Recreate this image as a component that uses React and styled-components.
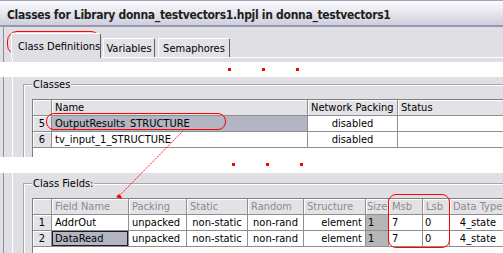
import React from 'react';
import styled, { createGlobalStyle } from 'styled-components';

const UI_FONT = '"DejaVu Sans Condensed", "Liberation Sans", Arial, sans-serif';

const GlobalStyle = createGlobalStyle`
  *, *::before, *::after {
    box-sizing: border-box;
  }
  html, body {
    margin: 0;
    padding: 0;
    background: #ffffff;
  }
  body {
    overflow: hidden;
    font-family: ${UI_FONT};
    font-size: 11px;
    color: #000;
  }
`;

const classRows = [
  { n: 5, name: 'OutputResults_STRUCTURE', packing: 'disabled', selected: true },
  { n: 6, name: 'tv_input_1_STRUCTURE', packing: 'disabled' },
];

const fieldRows = [
  { n: 1, name: 'AddrOut' },
  { n: 2, name: 'DataRead', focused: true },
];

function App() {
  return (
    <>
      <GlobalStyle />
      <Window>
        <TitleBar>Classes for Library donna_testvectors1.hpjl in donna_testvectors1</TitleBar>

        <Band $h={35}>
          <FrameEdge>
            <TabRow>
              <Tab $active $w={90}>Class Definitions</Tab>
              <Tab $w={52}>Variables</Tab>
              <Tab $w={72}>Semaphores</Tab>
            </TabRow>
            <PaneTop />
          </FrameEdge>
        </Band>

        <Gap $h={15}>
          <Dots $x={228} $y={6}><Dot /><Dot /><Dot /></Dots>
        </Gap>

        <Band $h={80}>
          <FrameEdge>
            <Pane>
              <GroupBox $top={7}>
                <Legend>Classes</Legend>
                <TableBox>
                  <Grid $cols="18px 255px 89px 140px">
                    <HeadCell />
                    <HeadCell>Name</HeadCell>
                    <HeadCell>Network Packing</HeadCell>
                    <HeadCell>Status</HeadCell>
                    {classRows.map((r) => (
                      <React.Fragment key={r.n}>
                        <RowNum>{r.n}</RowNum>
                        <Cell $tone={r.selected ? 'selected' : 'plain'}>{r.name}</Cell>
                        <Cell $align="center">{r.packing}</Cell>
                        <Cell />
                      </React.Fragment>
                    ))}
                  </Grid>
                </TableBox>
              </GroupBox>
            </Pane>
          </FrameEdge>
        </Band>

        <Gap $h={16}>
          <Dots $x={232} $y={6}><Dot /><Dot /><Dot /></Dots>
        </Gap>

        <Band $h={80}>
          <FrameEdge>
            <Pane>
              <GroupBox $top={10}>
                <Legend>Class Fields:</Legend>
                <TableBox>
                  <Grid $cols="18px 76px 57px 60px 55px 61px 22px 33px 26px 56px">
                    <HeadCell />
                    <HeadCell $dim>Field Name</HeadCell>
                    <HeadCell $dim>Packing</HeadCell>
                    <HeadCell $dim>Static</HeadCell>
                    <HeadCell $dim>Random</HeadCell>
                    <HeadCell $dim>Structure</HeadCell>
                    <HeadCell $dim $tight>Size</HeadCell>
                    <HeadCell $dim>Msb</HeadCell>
                    <HeadCell $dim>Lsb</HeadCell>
                    <HeadCell $dim>Data Type</HeadCell>
                    {fieldRows.map((r) => (
                      <React.Fragment key={r.n}>
                        <RowNum>{r.n}</RowNum>
                        <Cell $tone={r.focused ? 'focused' : 'plain'}>{r.name}</Cell>
                        <Cell>unpacked</Cell>
                        <Cell $align="center">non-static</Cell>
                        <Cell $align="center">non-rand</Cell>
                        <Cell $align="flex-end">element</Cell>
                        <Cell $tone="shaded" $tight>1</Cell>
                        <Cell>7</Cell>
                        <Cell $tight>0</Cell>
                        <Cell $align="center">4_state</Cell>
                      </React.Fragment>
                    ))}
                  </Grid>
                </TableBox>
              </GroupBox>
            </Pane>
          </FrameEdge>
        </Band>

        <Callout $x={7} $y={31} $w={94} $h={24} $r={10} />
        <Callout $x={46} $y={113} $w={180} $h={17} $r={8} />
        <Callout $x={388} $y={194} $w={62} $h={54} $r={8} />
        <Pointer viewBox="0 0 503 253" width="503" height="253">
          <line x1="183" y1="131" x2="119" y2="196" stroke="#ff0000" strokeWidth="1" strokeDasharray="1.5 1" />
          <path d="M116 197 L119 194 L121 196 L122 199 L119 198 Z" fill="#ff0000" />
        </Pointer>
      </Window>
    </>
  );
}

const Window = styled.div`
  position: relative;
  width: 503px;
  height: 253px;
  overflow: hidden;
  display: flex;
  flex-direction: column;
  background: #fff;
`;

const TitleBar = styled.div`
  height: 27px;
  flex: none;
  display: flex;
  align-items: center;
  padding: 4px 0 0 7px;
  border-top: 1px solid #a3a3bb;
  border-bottom: 2px solid #9797af;
  background: linear-gradient(to bottom, #fbfbfd 0%, #ececf2 35%, #cfcfdc 100%);
  font-weight: bold;
  font-size: 12px;
  letter-spacing: -0.3px;
  color: #1e1e1e;
  white-space: nowrap;
`;

const Band = styled.div`
  height: ${(p) => p.$h}px;
  flex: none;
  display: flex;
  padding-left: 3px;
  background: #e0dfe3;
  overflow: hidden;
`;

const FrameEdge = styled.div`
  flex: 1;
  display: flex;
  flex-direction: column;
  border-left: 1px solid #8e8ea2;
  padding-left: 7px;
`;

const TabRow = styled.div`
  height: 30px;
  flex: none;
  display: flex;
  align-items: flex-end;
`;

const Tab = styled.div`
  position: relative;
  z-index: ${(p) => (p.$active ? 1 : 0)};
  width: ${(p) => p.$w}px;
  height: ${(p) => (p.$active ? 25 : 19)}px;
  margin-right: ${(p) => (p.$active ? 2 : 3)}px;
  margin-bottom: ${(p) => (p.$active ? -1 : 0)}px;
  padding-left: ${(p) => (p.$active ? 6 : 0)}px;
  display: flex;
  align-items: center;
  justify-content: center;
  background: ${(p) => (p.$active ? '#e0dfe3' : '#e3e2e6')};
  border: 1px solid;
  border-color: #ffffff #5f5f66 transparent #ffffff;
  border-bottom: none;
  border-radius: 2px 2px 0 0;
  font-size: 11px;
  white-space: nowrap;
`;

const PaneTop = styled.div`
  flex: 1;
  margin-left: 1px;
  border-top: 1px solid #ffffff;
  border-left: 1px solid #ffffff;
`;

const Gap = styled.div`
  height: ${(p) => p.$h}px;
  flex: none;
  background: #fff;
`;

const Dots = styled.div`
  display: flex;
  gap: 31px;
  padding-left: ${(p) => p.$x}px;
  padding-top: ${(p) => p.$y}px;
`;

const Dot = styled.span`
  width: 3px;
  height: 3px;
  background: #ff0000;
`;

const Pane = styled.div`
  flex: 1;
  display: flex;
  margin-left: 1px;
  padding-left: 10px;
  border-left: 1px solid #ffffff;
`;

const GroupBox = styled.div`
  flex: 1;
  display: flex;
  flex-direction: column;
  margin-top: ${(p) => p.$top}px;
  border-top: 1px solid #a7a6aa;
  border-left: 1px solid #a7a6aa;
  box-shadow: inset 1px 1px 0 #ffffff;
  min-width: 0;
`;

const Legend = styled.div`
  align-self: flex-start;
  height: 13px;
  line-height: 13px;
  margin: -7px 0 0 8px;
  padding: 0 1px;
  background: #e0dfe3;
  font-size: 11px;
`;

const TableBox = styled.div`
  flex: 1;
  margin: 8px 0 0 8px;
  background: #ffffff;
  border-top: 1px solid #808080;
  border-left: 1px solid #808080;
`;

const Grid = styled.div`
  display: grid;
  width: max-content;
  grid-template-columns: ${(p) => p.$cols};
  grid-auto-rows: 15px;
  gap: 1px;
  background: #8f8f8f;
  border-bottom: 1px solid #8f8f8f;
`;

const HeadCell = styled.div`
  display: flex;
  align-items: center;
  padding-left: ${(p) => (p.$tight ? 1 : 3)}px;
  background: #e3e2e6;
  box-shadow: inset 1px 1px 0 #ffffff;
  color: ${(p) => (p.$dim ? '#8c8c8c' : '#000000')};
  white-space: nowrap;
  overflow: hidden;
`;

const RowNum = styled.div`
  display: flex;
  align-items: center;
  justify-content: center;
  background: #e3e2e6;
  box-shadow: inset 1px 1px 0 #ffffff;
`;

const toneColors = {
  plain: '#ffffff',
  selected: '#b3b5c2',
  focused: '#b3b5c2',
  shaded: '#b6b6b6',
};

const Cell = styled.div`
  display: flex;
  align-items: center;
  justify-content: ${(p) => p.$align || 'flex-start'};
  padding: 0 ${(p) => (p.$tight ? 2 : 3)}px;
  background: ${(p) => toneColors[p.$tone || 'plain']};
  box-shadow: ${(p) => (p.$tone === 'focused' ? 'inset 0 0 0 1px #1c1c1c' : 'none')};
  white-space: nowrap;
  overflow: hidden;
`;

const Callout = styled.div`
  position: absolute;
  left: ${(p) => p.$x}px;
  top: ${(p) => p.$y}px;
  width: ${(p) => p.$w}px;
  height: ${(p) => p.$h}px;
  border: 1px solid #ff0000;
  border-radius: ${(p) => p.$r}px;
  pointer-events: none;
`;

const Pointer = styled.svg`
  position: absolute;
  left: 0;
  top: 0;
  pointer-events: none;
`;

export default App;
